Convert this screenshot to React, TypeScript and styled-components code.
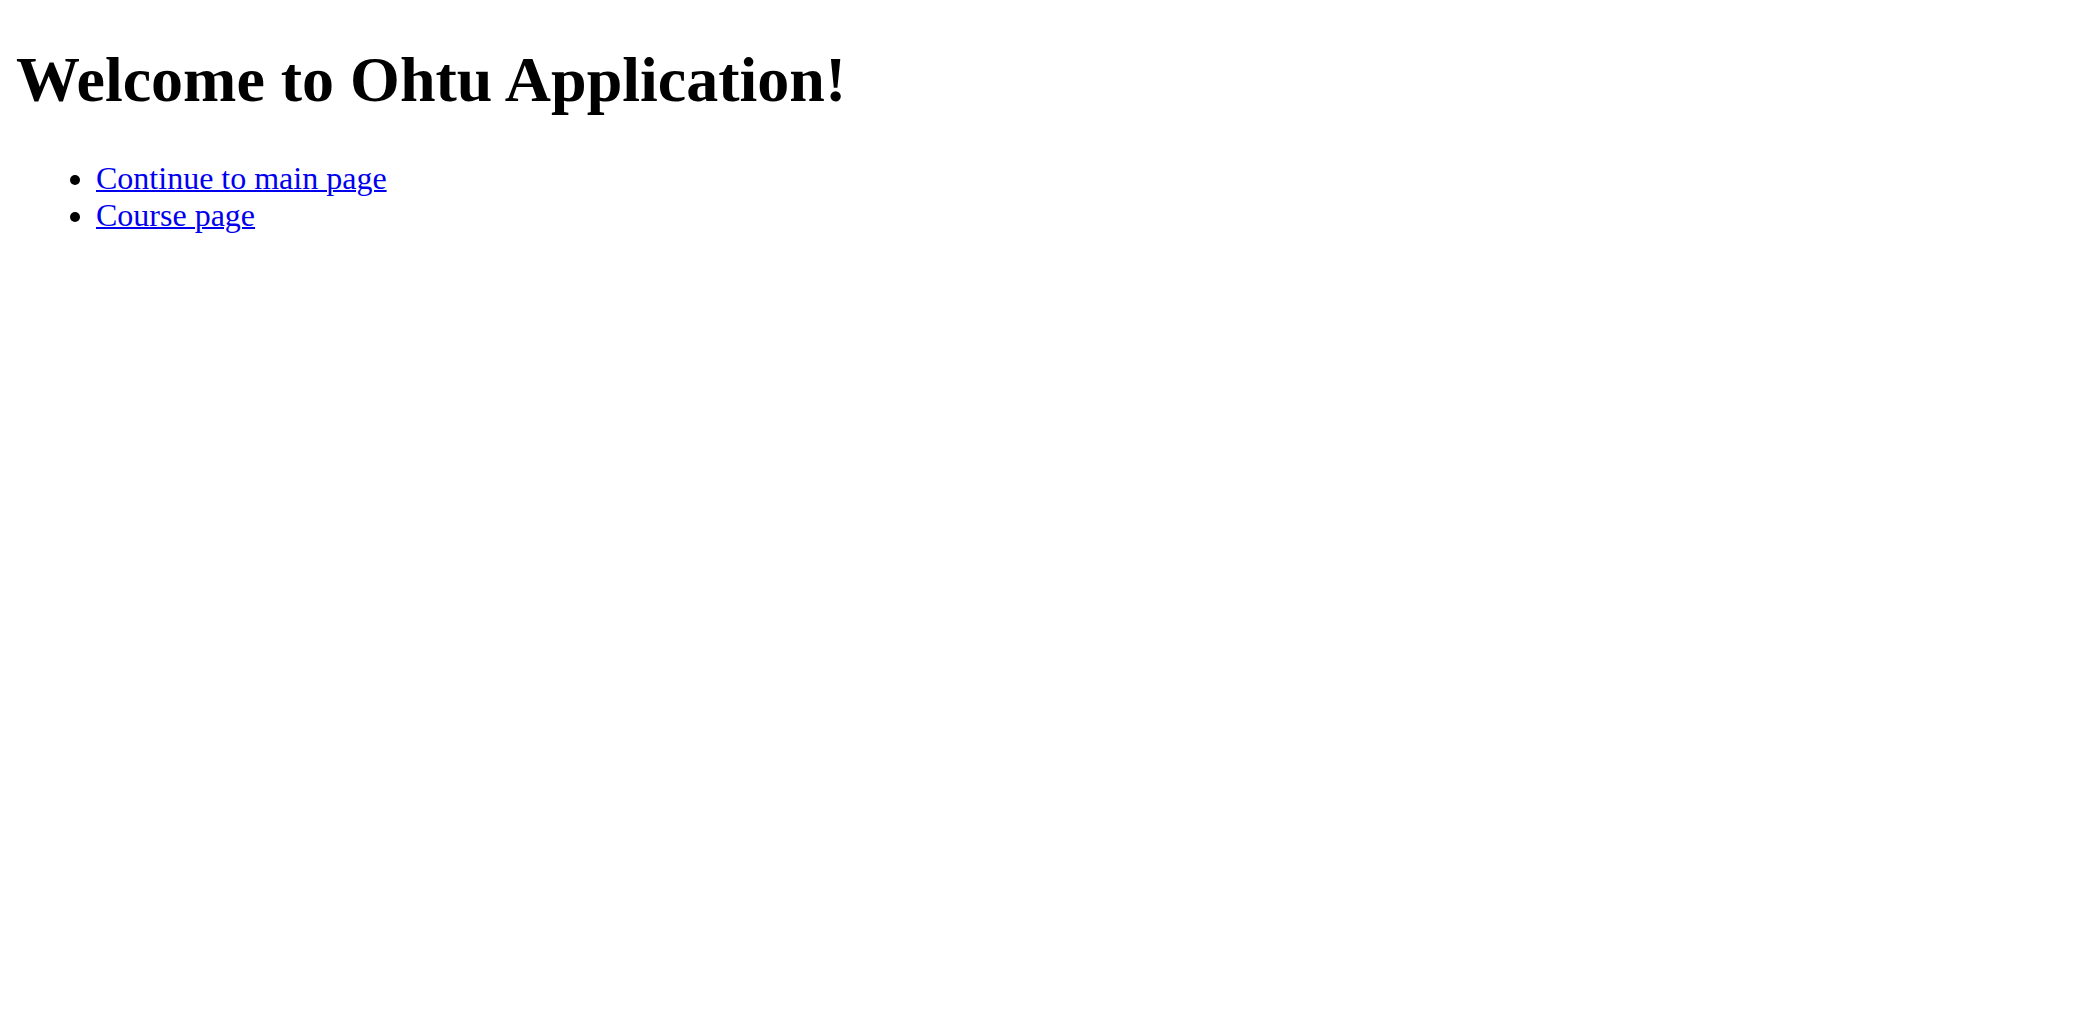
import React from "react";
import styled, { createGlobalStyle } from "styled-components";

const Global = createGlobalStyle`
  html, body { background: #fff; }
  body {
    margin: 0 16px 16px;
    font-family: "Liberation Serif", "Times New Roman", serif;
    font-size: 32px;
    color: #000;
  }
`;

const Page = styled.div`
  padding-top: 43px;
`;

const Title = styled.h1`
  font-size: 64px;
  font-weight: bold;
  margin: 0 0 42.88px;
`;

const LinkList = styled.ul`
  margin: 32px 0;
  padding-left: 80px;
  list-style: disc;
`;

const Item = styled.li``;

const Link = styled.a`
  color: #0000ee;
  text-decoration: underline;
  text-decoration-thickness: 2px;
`;

export default function App() {
  return (
    <Page>
      <Global />
      <Title>Welcome to Ohtu Application!</Title>
      <LinkList>
        <Item>
          <Link href="#">Continue to main page</Link>
        </Item>
        <Item>
          <Link href="#">Course page</Link>
        </Item>
      </LinkList>
    </Page>
  );
}
